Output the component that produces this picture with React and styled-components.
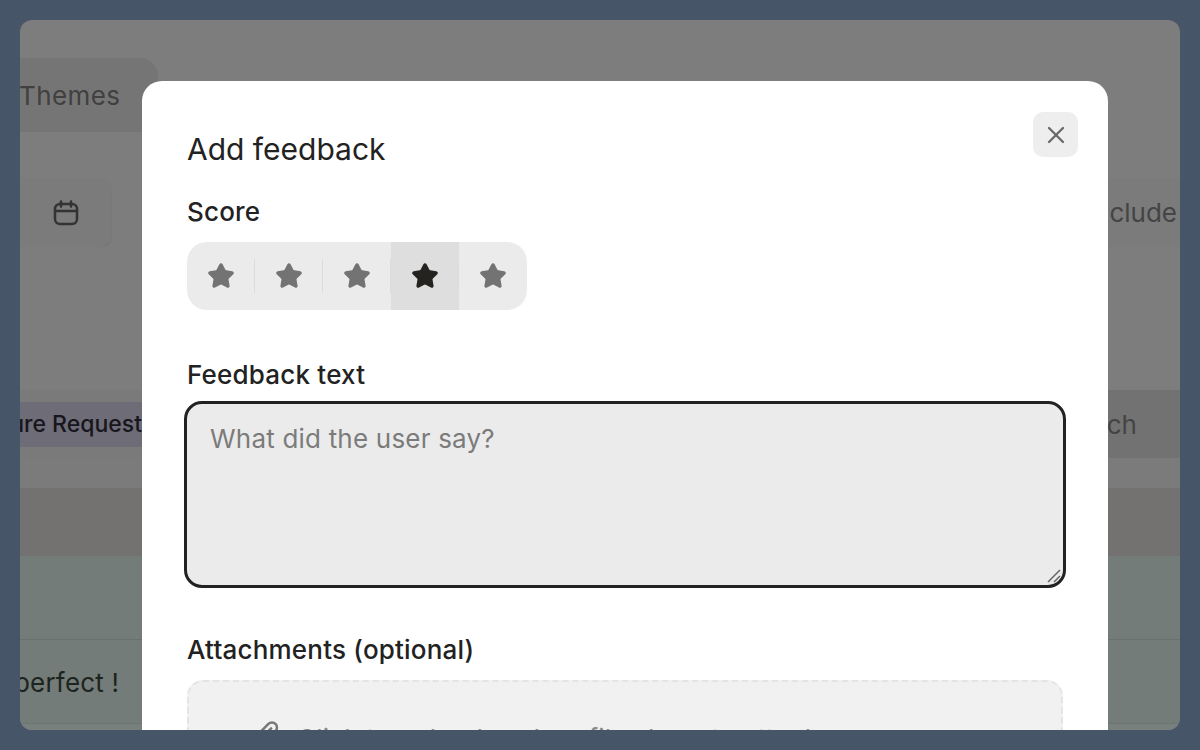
import React from "react";
import styled, { createGlobalStyle } from "styled-components";
import { X, Star } from "lucide-react";

const Global = createGlobalStyle`
  html, body { margin: 0; padding: 0; height: 100%; overflow: hidden; background: #475569; }
  body { font-family: Inter, "Liberation Sans", sans-serif; }
`;

const Stage = styled.div`
  width: 1200px;
  height: 750px;
  padding: 20px;
  box-sizing: border-box;
  background: #475569;
`;

const Frame = styled.div`
  position: relative;
  width: 1160px;
  height: 710px;
  border-radius: 12px;
  overflow: hidden;
  background: #7d7d7d;
  color: #3c3c3c;
  display: flex;
  flex-direction: column;
`;

const TabStrip = styled.div`
  height: 74px;
  margin-top: 38px;
  flex: none;
`;

const Tab = styled.div`
  width: 138px;
  height: 74px;
  background: #757575;
  border-radius: 0 18px 0 0;
  font-size: 26px;
  line-height: 76px;
  letter-spacing: 0.4px;
  color: #404040;
  text-indent: -1px;
`;

const Toolbar = styled.div`
  display: flex;
  justify-content: space-between;
  height: 69px;
  margin-top: 46px;
  flex: none;
`;

const DateButton = styled.div`
  width: 91px;
  height: 69px;
  display: flex;
  align-items: center;
  justify-content: center;
  box-sizing: border-box;
  background: #7b7b7b;
  border-radius: 0 12px 12px 0;
  box-shadow: 0 1px 3px rgba(0, 0, 0, 0.08);
  color: #333;
`;

const Include = styled.div`
  width: 72px;
  height: 69px;
  display: flex;
  align-items: center;
  justify-content: flex-end;
  padding-right: 3px;
  box-sizing: border-box;
  font-size: 26px;
  background: #7b7b7b;
  color: #444;
  white-space: nowrap;
`;

const Spacer = styled.div`
  height: ${(p) => p.$h}px;
  flex: none;
  background: ${(p) => p.$bg};
`;

const Row = styled.div`
  height: 68px;
  flex: none;
  display: flex;
  align-items: center;
  justify-content: space-between;
  background: #7a7a7a;
`;

const Tag = styled.div`
  width: 122px;
  height: 45px;
  display: flex;
  align-items: center;
  justify-content: flex-end;
  white-space: nowrap;
  background: #6e6c77;
  color: #16161c;
  font-size: 23px;
  font-weight: 500;
`;

const Trailing = styled.div`
  width: 72px;
  height: 100%;
  display: flex;
  align-items: center;
  justify-content: flex-end;
  padding-right: 43px;
  box-sizing: border-box;
  background: #727272;
  font-size: 26px;
  color: #444;
  white-space: nowrap;
`;

const GreenBand = styled.div`
  height: 84px;
  flex: none;
  background: #737c78;
  border-bottom: 1px solid #69716c;
  box-sizing: border-box;
`;

const GreenRow = styled.div`
  flex: 1;
  background: linear-gradient(
    to bottom,
    #737c78 calc(100% - 7px),
    #6d7571 calc(100% - 7px),
    #6d7571 calc(100% - 6px),
    #77807c calc(100% - 6px)
  );
  font-size: 26px;
  color: #1d2420;
  padding-top: 27px;
  white-space: nowrap;
  letter-spacing: 0.2px;
  text-indent: -6px;
`;

const Modal = styled.div`
  position: absolute;
  left: 122px;
  top: 61px;
  width: 966px;
  height: 700px;
  box-sizing: border-box;
  padding: 48px 45px;
  background: #fff;
  border-radius: 20px;
  color: #1f1f1f;
`;

const Close = styled.button`
  position: absolute;
  top: 31px;
  right: 30px;
  width: 45px;
  height: 45px;
  border: 0;
  padding: 0;
  border-radius: 10px;
  background: #eeeeee;
  color: #6a6a6a;
  display: flex;
  align-items: center;
  justify-content: center;
`;

const Title = styled.h2`
  margin: 0;
  font-size: 30px;
  line-height: 40px;
  font-weight: 400;
  color: #222;
`;

const Label = styled.div`
  font-size: 26px;
  line-height: 34px;
  font-weight: 500;
  letter-spacing: 0.2px;
  color: #222;
  margin-top: ${(p) => p.$top}px;
`;

const Stars = styled.div`
  display: flex;
  width: 340px;
  height: 68px;
  margin-top: 13px;
  border-radius: 20px;
  overflow: hidden;
  background: #ebebeb;
`;

const StarCell = styled.div`
  position: relative;
  width: 68px;
  flex: none;
  display: flex;
  align-items: center;
  justify-content: center;
  background: ${(p) => (p.$active ? "#dedede" : "transparent")};
  color: ${(p) => (p.$active ? "#242320" : "#737373")};
  &::after {
    content: "";
    display: ${(p) => (p.$last ? "none" : "block")};
    position: absolute;
    right: 0;
    top: 17px;
    height: 34px;
    width: 1px;
    background: #dcdcdc;
  }
`;

const TextArea = styled.div`
  position: relative;
  width: 882px;
  height: 187px;
  margin-top: 9px;
  margin-left: -3px;
  box-sizing: border-box;
  padding: 19px 23px;
  background: #ebebeb;
  border: 3px solid #222;
  border-radius: 18px;
  font-size: 26px;
  letter-spacing: 0.2px;
  line-height: 32px;
  color: #7b7b7b;
`;

const Grip = styled.svg`
  position: absolute;
  right: 1px;
  bottom: 1px;
`;

const DropZone = styled.div`
  width: 876px;
  height: 120px;
  margin-top: 13px;
  box-sizing: border-box;
  padding: 38px 64px;
  display: flex;
  align-items: flex-start;
  gap: 14px;
  background: #f1f1f1;
  border: 2px dashed #e4e4e4;
  border-radius: 16px;
  font-size: 26px;
  letter-spacing: 0.2px;
  line-height: 32px;
  color: #8a8a8a;
  white-space: nowrap;
`;

const Clip = styled.svg`
  flex: none;
`;

const DropText = styled.span`
  padding-top: 3px;
`;

const CalendarIcon = () => (
  <svg width="28" height="28" viewBox="0 0 28 28" fill="none" stroke="currentColor" strokeWidth="2.5" strokeLinecap="round">
    <rect x="3" y="5" width="22" height="20" rx="5" />
    <path d="M9 2.5v5M19 2.5v5M3 12h22" />
  </svg>
);

const scores = [1, 2, 3, 4, 5];

export default function App() {
  return (
    <Stage>
      <Global />
      <Frame>
        <TabStrip><Tab>Themes</Tab></TabStrip>
        <Toolbar>
          <DateButton><CalendarIcon /></DateButton>
          <Include>Include</Include>
        </Toolbar>
        <Spacer $h={143} $bg="#7d7d7d" />
        <Row>
          <Tag>Feature Request</Tag>
          <Trailing>Search</Trailing>
        </Row>
        <Spacer $h={30} $bg="#7b7b7b" />
        <Spacer $h={68} $bg="#737271" />
        <GreenBand />
        <GreenRow>perfect !</GreenRow>
        <Modal>
          <Close aria-label="Close"><X size={28} strokeWidth={2} /></Close>
          <Title>Add feedback</Title>
          <Label $top={26}>Score</Label>
          <Stars>
            {scores.map((n) => (
              <StarCell key={n} $active={n === 4} $last={n === 5}>
                <Star size={28} fill="currentColor" strokeWidth={2} />
              </StarCell>
            ))}
          </Stars>
          <Label $top={48}>Feedback text</Label>
          <TextArea>
            What did the user say?
            <Grip width="16" height="16" viewBox="0 0 16 16">
              <path d="M2 14 14 2M8 14 14 8" stroke="#666" strokeWidth="1.5" fill="none" />
            </Grip>
          </TextArea>
          <Label $top={45}>Attachments (optional)</Label>
          <DropZone>
            <Clip width="30" height="30" viewBox="0 0 24 24" fill="none" stroke="#777" strokeWidth="2">
              <path d="m21.44 11.05-9.19 9.19a6 6 0 0 1-8.49-8.49l8.57-8.57A4 4 0 1 1 18 8.84l-8.59 8.57a2 2 0 0 1-2.83-2.83l8.49-8.48" />
            </Clip>
            <DropText>Click to upload or drag files here to attach</DropText>
          </DropZone>
        </Modal>
      </Frame>
    </Stage>
  );
}
